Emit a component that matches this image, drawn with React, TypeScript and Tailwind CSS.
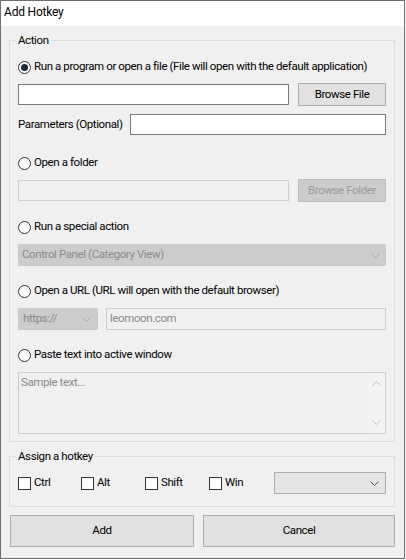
import React from "react";

const font = { fontFamily: 'Roboto, "Noto Sans", sans-serif' };

function Chevron({ color = "#606060", dir = "down" }: { color?: string; dir?: "down" | "up" }) {
  return (
    <svg width="9" height="5" viewBox="0 0 9 5" className="block">
      {dir === "down" ? (
        <polyline points="0.5,0.5 4.5,4.5 8.5,0.5" fill="none" stroke={color} strokeWidth="1" />
      ) : (
        <polyline points="0.5,4.5 4.5,0.5 8.5,4.5" fill="none" stroke={color} strokeWidth="1" />
      )}
    </svg>
  );
}

function Radio({ checked, label }: { checked?: boolean; label: string }) {
  return (
    <div className="flex items-center h-[16px] ml-[8px]">
      <div className="w-[13px] h-[13px] shrink-0 rounded-full border border-[#333333] bg-white flex items-center justify-center">
        {checked && <div className="w-[7px] h-[7px] rounded-full bg-[#1f2a35]" />}
      </div>
      <span className="ml-[3px] text-[11.5px] text-black leading-none whitespace-nowrap">{label}</span>
    </div>
  );
}

function Check({ label, w }: { label: string; w: string }) {
  return (
    <div className={`flex items-center ${w}`}>
      <div className="w-[13px] h-[13px] border border-[#333333] bg-white" />
      <span className="ml-[3px] text-[11.5px] text-black leading-none">{label}</span>
    </div>
  );
}

export default function App() {
  return (
    <div className="w-[406px] h-[560px] bg-white tracking-[-0.4px]" style={font}>
      <div className="w-[405px] h-[559px] border border-[#6f6f6f] flex flex-col bg-[#f0f0f0]">
        <div className="h-[25px] bg-white flex items-center pl-[3px] pb-[3px]">
          <span className="text-[12px] text-black tracking-[-0.2px]">Add Hotkey</span>
        </div>

        <div className="flex flex-col pl-[8px] pr-[9px]">
          {/* Action group */}
          <div className="relative mt-[14px] h-[402px] border border-[#dcdcdc] flex flex-col">
            <span className="absolute left-[6px] top-[-8px] px-[2px] bg-[#f0f0f0] text-[11.5px] leading-[14px] text-black">
              Action
            </span>
            <div className="mt-[18px]">
              <Radio checked label="Run a program or open a file (File will open with the default application)" />
            </div>
            <div className="mt-[8px] flex items-center h-[23px] ml-[8px]">
              <div className="w-[271px] h-[21px] bg-white border border-[#7a7a7a]" />
              <div className="ml-[9px] w-[88px] h-[23px] bg-[#e1e1e1] border border-[#adadad] flex items-center justify-center text-[11.5px] text-black">
                Browse File
              </div>
            </div>
            <div className="mt-[8px] flex items-center h-[21px] ml-[8px]">
              <span className="w-[112px] text-[11.5px] text-black whitespace-nowrap">Parameters (Optional)</span>
              <div className="w-[256px] h-[21px] bg-white border border-[#7a7a7a]" />
            </div>

            <div className="mt-[20px]">
              <Radio label="Open a folder" />
            </div>
            <div className="mt-[8px] flex items-center h-[23px] ml-[8px]">
              <div className="w-[271px] h-[21px] bg-[#f0f0f0] border border-[#cccccc]" />
              <div className="ml-[9px] w-[88px] h-[23px] bg-[#cccccc] border border-[#bfbfbf] flex items-center justify-center text-[11.5px] text-[#9a9a9a]">
                Browse Folder
              </div>
            </div>

            <div className="mt-[17px]">
              <Radio label="Run a special action" />
            </div>
            <div className="mt-[9px] ml-[8px] w-[368px] h-[22px] bg-[#cccccc] border border-[#cccccc] flex items-center justify-between pl-[3px] pr-[5px]">
              <span className="text-[11.5px] text-[#8a8a8a]">Control Panel (Category View)</span>
              <Chevron color="#a8a8a8" />
            </div>

            <div className="mt-[17px]">
              <Radio label="Open a URL (URL will open with the default browser)" />
            </div>
            <div className="mt-[9px] ml-[8px] flex items-center h-[22px]">
              <div className="w-[80px] h-[22px] bg-[#cccccc] border border-[#cccccc] flex items-center justify-between pl-[4px] pr-[6px]">
                <span className="text-[11.5px] text-[#8a8a8a]">https://</span>
                <Chevron color="#a8a8a8" />
              </div>
              <div className="ml-[8px] w-[280px] h-[22px] bg-[#f0f0f0] border border-[#cccccc] flex items-center pl-[3px]">
                <span className="text-[11.5px] text-[#8a8a8a]">leomoon.com</span>
              </div>
            </div>

            <div className="mt-[17px]">
              <Radio label="Paste text into active window" />
            </div>
            <div className="mt-[9px] ml-[8px] w-[368px] h-[62px] bg-[#f0f0f0] border border-[#cccccc] flex">
              <div className="flex-1 pl-[2px] pt-[1px] text-[11.5px] text-[#8a8a8a]">Sample text...</div>
              <div className="w-[17px] flex flex-col items-center justify-between py-[8px] bg-[#f3f3f3]">
                <Chevron color="#c0c0c0" dir="up" />
                <Chevron color="#c0c0c0" />
              </div>
            </div>
          </div>

          {/* Hotkey group */}
          <div className="relative mt-[14px] h-[51px] border border-[#dcdcdc] flex flex-col">
            <span className="absolute left-[6px] top-[-8px] px-[2px] bg-[#f0f0f0] text-[11.5px] leading-[14px] text-black">
              Assign a hotkey
            </span>
            <div className="mt-[15px] ml-[8px] flex items-center h-[22px]">
              <Check label="Ctrl" w="w-[63px]" />
              <Check label="Alt" w="w-[64px]" />
              <Check label="Shift" w="w-[64px]" />
              <Check label="Win" w="w-[65px]" />
              <div className="w-[112px] h-[22px] bg-[#e5e5e5] border border-[#adadad] flex items-center justify-end pr-[6px]">
                <Chevron color="#555555" />
              </div>
            </div>
          </div>

          <div className="mt-[8px] ml-[1px] flex h-[32px]">
            <div className="w-[184px] h-[32px] bg-[#e1e1e1] border border-[#adadad] flex items-center justify-center text-[11.5px] text-black">
              Add
            </div>
            <div className="ml-[9px] w-[192px] h-[32px] bg-[#e1e1e1] border border-[#adadad] flex items-center justify-center text-[11.5px] text-black">
              Cancel
            </div>
          </div>
        </div>
      </div>
    </div>
  );
}
